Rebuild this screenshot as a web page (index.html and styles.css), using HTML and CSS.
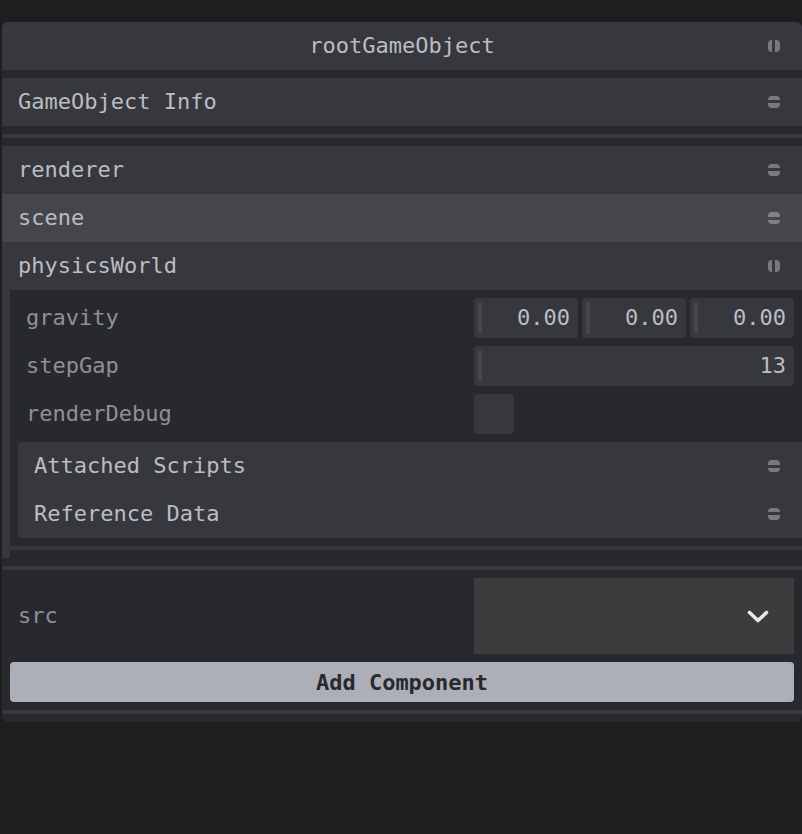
FILE: index.html
```html
<!DOCTYPE html>
<html>
<head>
<meta charset="utf-8">
<link rel="stylesheet" href="styles.css">
</head>
<body>
<div class="pane">
  <div class="pane-title">rootGameObject<span class="mark open"></span></div>
  <div class="pane-body">
    <div class="fold-btn">GameObject Info<span class="mark"></span></div>
    <div class="sep"></div>
    <div class="group">
      <div class="fold-btn">renderer<span class="mark"></span></div>
      <div class="fold-btn hover">scene<span class="mark"></span></div>
      <div class="fold-btn">physicsWorld<span class="mark open"></span></div>
      <div class="fold-content">
        <div class="row inner">
          <div class="lbl">gravity</div>
          <div class="val multi">
            <div class="txt"><span class="knob"></span>0.00</div>
            <div class="txt"><span class="knob"></span>0.00</div>
            <div class="txt"><span class="knob"></span>0.00</div>
          </div>
        </div>
        <div class="row inner">
          <div class="lbl">stepGap</div>
          <div class="val">
            <div class="txt"><span class="knob"></span>13</div>
          </div>
        </div>
        <div class="row inner">
          <div class="lbl">renderDebug</div>
          <div class="val">
            <div class="check"></div>
          </div>
        </div>
        <div class="subfolders">
          <div class="fold-btn sub first">Attached Scripts<span class="mark"></span></div>
          <div class="fold-btn sub last">Reference Data<span class="mark"></span></div>
        </div>
        <div class="sep"></div>
      </div>
    </div>
    <div class="sep"></div>
    <div class="row src">
      <div class="lbl">src</div>
      <div class="val">
        <div class="select">
          <svg class="chev" width="22" height="13" viewBox="0 0 22 13"><path d="M2.5 2.5 L11 10.5 L19.5 2.5" fill="none" stroke="#e8e8e8" stroke-width="3.6" stroke-linecap="round" stroke-linejoin="round"/></svg>
        </div>
      </div>
    </div>
    <button class="btn">Add Component</button>
    <div class="sep"></div>
  </div>
</div>
</body>
</html>
```

FILE: styles.css
```css
html, body {
  margin: 0;
  padding: 0;
  background: #1e1e1e;
}
body {
  padding-top: 22px;
  font-family: "DejaVu Sans Mono", monospace;
  font-size: 22px;
  color: #bbbcc4;
}
.pane {
  width: 800px;
  margin-left: 2px;
  background: #28292e;
  border-radius: 6px;
  overflow: hidden;
}
.pane-title {
  position: relative;
  height: 48px;
  line-height: 48px;
  text-align: center;
  background: #37383d;
  color: #bbbcc4;
}
.pane-body {
  display: flex;
  flex-direction: column;
  gap: 8px;
  padding: 8px 0;
}
.group {
  display: flex;
  flex-direction: column;
}
.fold-btn {
  position: relative;
  height: 48px;
  line-height: 48px;
  padding-left: 16px;
  background: #37383d;
  color: #bbbcc4;
  white-space: nowrap;
}
.fold-btn.hover {
  background: #45464b;
}
.mark {
  position: absolute;
  right: 22px;
  top: 50%;
  margin-top: -6px;
  width: 12px;
  height: 12px;
  border-radius: 4px;
  opacity: 0.5;
  background: linear-gradient(to bottom, #bbbcc4 0, #bbbcc4 4.5px, transparent 4.5px, transparent 7.5px, #bbbcc4 7.5px);
}
.mark.open {
  background: linear-gradient(to right, #bbbcc4 0, #bbbcc4 4.5px, transparent 4.5px, transparent 7.5px, #bbbcc4 7.5px);
}
.sep {
  height: 4px;
  background: #37383d;
}
.fold-content {
  display: flex;
  flex-direction: column;
  gap: 8px;
  padding: 8px 0;
  border-left: 8px solid #37383d;
}
.row {
  display: flex;
  align-items: center;
  height: 40px;
  padding: 0 8px 0 16px;
}
.lbl {
  flex: 1;
  margin-top: -2px;
  color: #8f9097;
  white-space: nowrap;
}
.val {
  width: 320px;
  flex-shrink: 0;
  display: flex;
}
.val.multi {
  gap: 4px;
}
.txt {
  position: relative;
  flex: 1;
  height: 40px;
  line-height: 40px;
  text-align: right;
  padding-right: 8px;
  background: #37383d;
  border-radius: 4px;
  color: #bbbcc4;
}
.knob {
  position: absolute;
  left: 4px;
  top: 4px;
  width: 4px;
  height: 32px;
  border-radius: 2px;
  background: #45464b;
}
.check {
  width: 40px;
  height: 40px;
  border-radius: 4px;
  background: #37383d;
}
.subfolders {
  display: flex;
  flex-direction: column;
  margin-left: 8px;
}
.fold-btn.sub.first {
  border-radius: 4px 0 0 2px;
}
.fold-btn.sub.last {
  border-radius: 0 0 0 4px;
}
.row.src {
  height: 76px;
}
.select {
  position: relative;
  width: 320px;
  height: 76px;
  background: #3c3c3c;
}
.chev {
  position: absolute;
  right: 25px;
  top: 32px;
}
.btn {
  display: block;
  margin: 0 8px;
  height: 40px;
  border: 0;
  border-radius: 4px;
  background: #adafb8;
  color: #28292e;
  font-family: "DejaVu Sans Mono", monospace;
  font-size: 22px;
  font-weight: bold;
  padding: 0;
}
```
